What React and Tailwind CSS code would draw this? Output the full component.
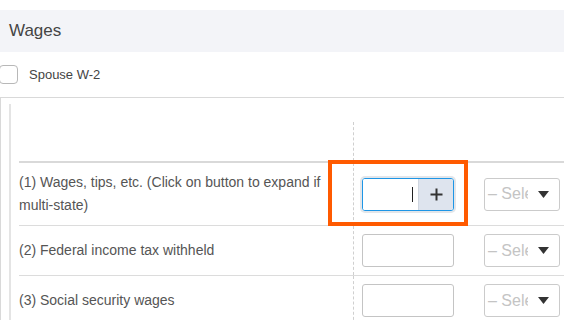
import React from "react";

function AmountInput({ active }) {
  if (active) {
    return (
      <div className="flex w-[92px] h-[33px] rounded-[3px] border border-[#1e96e6] shadow-[0_0_0_2px_#e3e6ea] overflow-hidden">
        <div className="flex-1 flex items-center justify-end pr-[5px] bg-white">
          <div className="w-px h-[15px] bg-[#222]" />
        </div>
        <div className="w-[35px] flex items-center justify-center bg-[#dee4ee] border-l border-[#cfd6e0]">
          <svg width="13" height="13" viewBox="0 0 13 13">
            <path d="M6.5 0.5v12M0.5 6.5h12" stroke="#333" strokeWidth="2" />
          </svg>
        </div>
      </div>
    );
  }
  return (
    <div className="w-[92px] h-[33px] rounded-[3px] border border-[#c4c4c4] bg-white" />
  );
}

function StateSelect() {
  return (
    <div className="relative w-[76px] h-[33px] rounded-[3px] border border-[#cbcbcb] bg-white flex items-center overflow-hidden">
      <span className="pl-[3px] w-[43px] overflow-hidden whitespace-nowrap text-[16px] text-[#c4c4c4]">
        – Select –
      </span>
      <svg className="absolute left-[53px] top-[12px]" width="11" height="7" viewBox="0 0 11 7">
        <path d="M0 0h11L5.5 7z" fill="#333" />
      </svg>
    </div>
  );
}

function Row({ children, active, first }) {
  return (
    <div
      className={`flex ${first ? "border-t-2 border-[#d9d9d9] h-[64px]" : "border-t border-[#dcdcdc] h-[50px]"}`}
    >
      <div className="w-[334px] flex items-center text-[14px] leading-[23px] text-[#555] pr-1">
        {children}
      </div>
      <div className="flex-1 border-l border-dashed border-[#cfcfcf] flex items-center pl-[8px] gap-[30px]">
        <AmountInput active={active} />
        <StateSelect />
      </div>
    </div>
  );
}

export default function App() {
  return (
    <div className="relative w-[564px] h-[320px] overflow-hidden bg-white font-['Liberation_Sans',Arial,sans-serif]">
      <div className="pt-[10px]">
        <div className="h-[42px] bg-[#f3f4f8] flex items-center pl-[9px] text-[17px] text-[#444]">
          Wages
        </div>
      </div>

      <div className="flex items-center h-[45px] gap-[11px]">
        <div className="w-[19px] h-[19px] -ml-px border border-[#b8b8b8] rounded-[4px] bg-white" />
        <span className="text-[13px] text-[#444]">Spouse W-2</span>
      </div>

      <div className="flex border-t border-l border-[#d9d9d9] w-[600px]">
        <div className="ml-[8px] mt-[6px] w-[2px] bg-[#e4e4e4]" />
        <div className="ml-[8px] flex-1">
          <div className="flex h-[63px]">
            <div className="w-[334px]" />
            <div className="flex-1 mt-[24px] border-l border-dashed border-[#cfcfcf]" />
          </div>
          <Row first active>
            <span>
              (1) Wages, tips, etc. (Click on button to expand if
              <br />
              multi-state)
            </span>
          </Row>
          <Row>(2) Federal income tax withheld</Row>
          <Row>(3) Social security wages</Row>
        </div>
      </div>

      <div className="absolute left-[328px] top-[160px] w-[140px] h-[66px] border-[4px] border-[#ff5a00]" />
    </div>
  );
}
